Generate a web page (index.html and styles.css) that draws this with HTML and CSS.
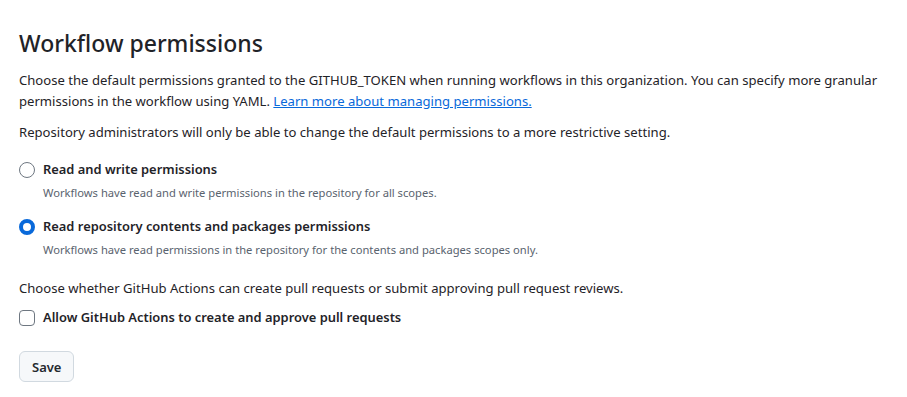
FILE: index.html
```html
<!DOCTYPE html>
<html>
<head>
<meta charset="utf-8">
<link rel="stylesheet" href="styles.css">
</head>
<body>
<div class="page">
  <h2 class="title">Workflow permissions</h2>
  <p class="desc">Choose the default permissions granted to the GITHUB_TOKEN when running workflows in this organization. You can specify more granular permissions in the workflow using YAML. <a href="#">Learn more about managing permissions.</a></p>
  <p class="desc second">Repository administrators will only be able to change the default permissions to a more restrictive setting.</p>
  <div class="options">
    <label class="option">
      <span class="radio"></span>
      <span class="opt-body">
        <span class="opt-label">Read and write permissions</span>
        <span class="opt-note">Workflows have read and write permissions in the repository for all scopes.</span>
      </span>
    </label>
    <label class="option">
      <span class="radio checked"></span>
      <span class="opt-body">
        <span class="opt-label">Read repository contents and packages permissions</span>
        <span class="opt-note">Workflows have read permissions in the repository for the contents and packages scopes only.</span>
      </span>
    </label>
  </div>
  <p class="desc third">Choose whether GitHub Actions can create pull requests or submit approving pull request reviews.</p>
  <label class="check-row">
    <span class="checkbox"></span>
    <span class="opt-label">Allow GitHub Actions to create and approve pull requests</span>
  </label>
  <button class="btn">Save</button>
</div>
</body>
</html>
```
FILE: styles.css
```css
html, body { margin: 0; padding: 0; background: #fff; }
body {
  font-family: "Noto Sans", "Open Sans", sans-serif;
  color: #1f2328;
  font-size: 13.1px;
  line-height: 21px;
}
.page { padding: 25px 10px 0 19px; }
.title {
  margin: 0 0 9px 0;
  font-size: 23px;
  font-weight: 500;
  line-height: 36px;
}
.desc { margin: 0 0 10px 0; }
.desc a { color: #0969da; text-decoration: underline; }
.second { margin-bottom: 16px; }
.options { display: flex; flex-direction: column; gap: 14px; }
.option { display: flex; align-items: flex-start; gap: 8px; }
.radio {
  width: 16px; height: 16px; box-sizing: border-box;
  border: 1px solid #6e7781; border-radius: 50%;
  margin-top: 3px; flex: none;
}
.radio.checked { border: 4px solid #0969da; }
.opt-body { display: flex; flex-direction: column; gap: 4px; }
.opt-label { font-weight: 600; font-size: 12.9px; }
.opt-note { font-size: 11.2px; line-height: 18px; color: #59636e; }
.third { margin-top: 19px; margin-bottom: 8px; }
.check-row { display: flex; align-items: center; gap: 8px; }
.checkbox {
  width: 16px; height: 16px; box-sizing: border-box;
  border: 1px solid #6e7781; border-radius: 4px; flex: none;
}
.btn {
  margin-top: 23px;
  font-family: inherit; font-size: 13px; font-weight: 600;
  color: #25292e; background: #f6f8fa;
  border: 1px solid #d1d9e0; border-radius: 6px;
  height: 31px; padding: 0 12px;
}
```
